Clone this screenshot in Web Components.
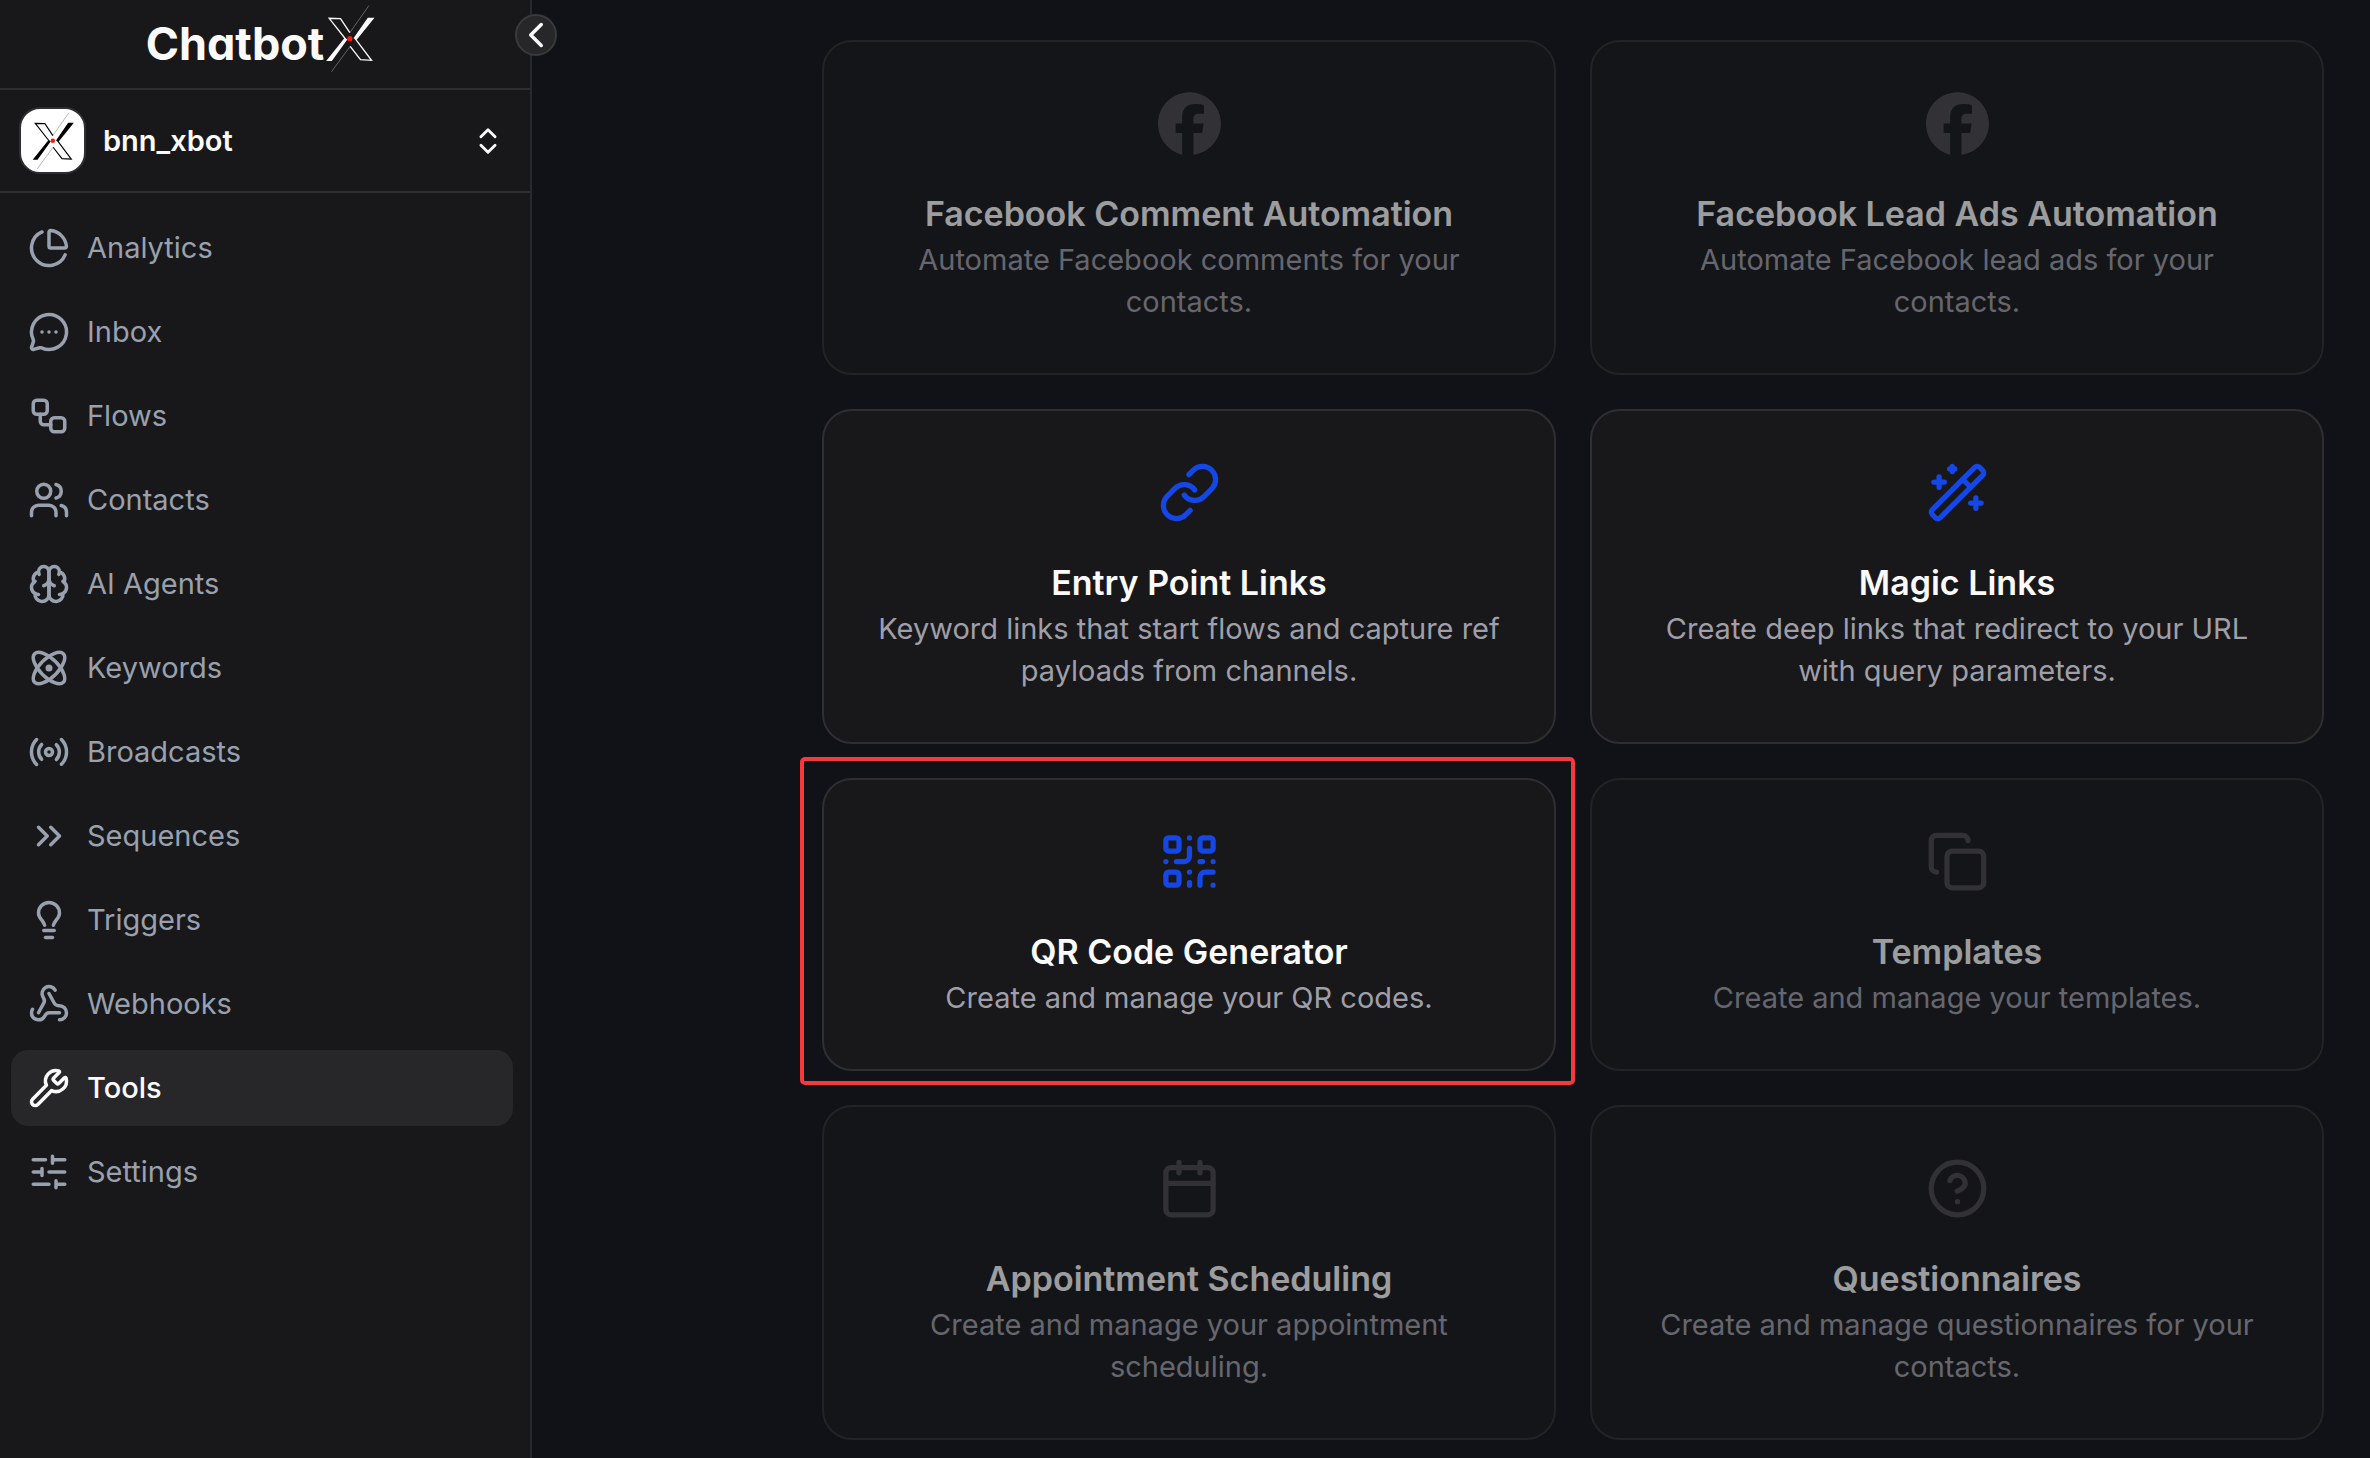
<!DOCTYPE html>
<html lang="en">
<head>
<meta charset="utf-8">
<meta name="viewport" content="width=device-width, initial-scale=1">
<title>ChatbotX - Tools</title>
<style>
  :root {
    --bg: #101217;
    --panel: #18181a;
    --panel-active: #272729;
    --line: #2f2f31;
    --text: #fafafa;
    --muted: #9f9fa9;
    --nav: #99a1af;
    --accent: #1447e6;
    --mark: #f5393c;
  }

  body {
    margin: 0;
    background: var(--bg);
    color: var(--text);
    font-family: Inter, "Liberation Sans", sans-serif;
    font-size: 29px;
    line-height: 42px;
  }
</style>
</head>
<body>

<app-shell>
  <side-bar slot="sidebar">
    <team-switcher slot="team">bnn_xbot</team-switcher>
    <nav-item icon="pie">Analytics</nav-item>
    <nav-item icon="message">Inbox</nav-item>
    <nav-item icon="workflow">Flows</nav-item>
    <nav-item icon="users">Contacts</nav-item>
    <nav-item icon="brain">AI Agents</nav-item>
    <nav-item icon="atom">Keywords</nav-item>
    <nav-item icon="radio">Broadcasts</nav-item>
    <nav-item icon="chevrons-right">Sequences</nav-item>
    <nav-item icon="bulb">Triggers</nav-item>
    <nav-item icon="webhook">Webhooks</nav-item>
    <nav-item icon="wrench" active>Tools</nav-item>
    <nav-item icon="sliders">Settings</nav-item>
  </side-bar>

  <tool-card icon="facebook" disabled>
    <span slot="title">Facebook Comment Automation</span>
    Automate Facebook comments for your contacts.
  </tool-card>
  <tool-card icon="facebook" disabled>
    <span slot="title">Facebook Lead Ads Automation</span>
    Automate Facebook lead ads for your contacts.
  </tool-card>
  <tool-card icon="link">
    <span slot="title">Entry Point Links</span>
    Keyword links that start flows and capture ref payloads from channels.
  </tool-card>
  <tool-card icon="wand">
    <span slot="title">Magic Links</span>
    Create deep links that redirect to your URL with query parameters.
  </tool-card>
  <tool-card icon="qr" marked>
    <span slot="title">QR Code Generator</span>
    Create and manage your QR codes.
  </tool-card>
  <tool-card icon="copy" disabled>
    <span slot="title">Templates</span>
    Create and manage your templates.
  </tool-card>
  <tool-card icon="calendar" disabled>
    <span slot="title">Appointment Scheduling</span>
    Create and manage your appointment scheduling.
  </tool-card>
  <tool-card icon="help" disabled>
    <span slot="title">Questionnaires</span>
    Create and manage questionnaires for your contacts.
  </tool-card>
</app-shell>

<script>
const ICONS = {
  pie: `<path d="M21 12c.552 0 1.005-.449.95-.998a10 10 0 0 0-8.953-8.951c-.55-.055-.998.398-.998.95v8a1 1 0 0 0 1 1z"/><path d="M21.21 15.89A10 10 0 1 1 8 2.83"/>`,
  message: `<path d="M2.992 16.342a2 2 0 0 1 .094 1.167l-1.065 3.29a1 1 0 0 0 1.236 1.168l3.413-.998a2 2 0 0 1 1.099.092 10 10 0 1 0-4.777-4.719"/><path d="M8 12h.01M12 12h.01M16 12h.01"/>`,
  workflow: `<rect width="8" height="8" x="3" y="3" rx="2"/><path d="M7 11v4a2 2 0 0 0 2 2h4"/><rect width="8" height="8" x="13" y="13" rx="2"/>`,
  users: `<path d="M16 21v-2a4 4 0 0 0-4-4H6a4 4 0 0 0-4 4v2"/><path d="M16 3.128a4 4 0 0 1 0 7.744"/><path d="M22 21v-2a4 4 0 0 0-3-3.87"/><circle cx="9" cy="7" r="4"/>`,
  brain: `<path d="M12 5a3 3 0 1 0-5.997.125 4 4 0 0 0-2.526 5.77 4 4 0 0 0 .556 6.588A4 4 0 1 0 12 18Z"/><path d="M12 5a3 3 0 1 1 5.997.125 4 4 0 0 1 2.526 5.77 4 4 0 0 1-.556 6.588A4 4 0 1 1 12 18Z"/><path d="M15 13a4.5 4.5 0 0 1-3-4 4.5 4.5 0 0 1-3 4"/><path d="M17.599 6.5a3 3 0 0 0 .399-1.375"/><path d="M6.003 5.125A3 3 0 0 0 6.401 6.5"/><path d="M3.477 10.896a4 4 0 0 1 .585-.396"/><path d="M19.938 10.5a4 4 0 0 1 .585.396"/><path d="M6 18a4 4 0 0 1-1.967-.516"/><path d="M19.967 17.484A4 4 0 0 1 18 18"/>`,
  atom: `<circle cx="12" cy="12" r="1"/><path d="M20.2 20.2c2.04-2.03.02-7.36-4.5-11.9-4.54-4.52-9.87-6.54-11.9-4.5-2.04 2.03-.02 7.36 4.5 11.9 4.54 4.52 9.87 6.54 11.9 4.5Z"/><path d="M15.7 15.7c4.52-4.54 6.54-9.87 4.5-11.9-2.03-2.04-7.36-.02-11.9 4.5-4.52 4.54-6.54 9.87-4.5 11.9 2.03 2.04 7.36.02 11.9-4.5Z"/>`,
  radio: `<path d="M4.9 19.1C1 15.2 1 8.8 4.9 4.9"/><path d="M7.8 16.2c-2.3-2.3-2.3-6.1 0-8.5"/><circle cx="12" cy="12" r="2"/><path d="M16.2 7.8c2.3 2.3 2.3 6.1 0 8.5"/><path d="M19.1 4.9C23 8.8 23 15.1 19.1 19"/>`,
  "chevrons-right": `<path d="m6 17 5-5-5-5"/><path d="m13 17 5-5-5-5"/>`,
  bulb: `<path d="M14.5 15c.2-1 .7-1.7 1.5-2.8C17.5 10.6 18 9.5 18 8A6 6 0 0 0 6 8c0 1.5.5 2.6 2 4.2.8 1.1 1.3 1.8 1.5 2.8"/><path d="M9 18h6"/><path d="M10 22h4"/>`,
  webhook: `<path d="M18 16.98h-5.99c-1.1 0-1.95.94-2.48 1.9A4 4 0 0 1 2 17c.01-.7.2-1.4.57-2"/><path d="m6 17 3.13-5.78c.53-.97.1-2.18-.5-3.1a4 4 0 1 1 6.89-4.06"/><path d="m12 6 3.13 5.73C15.66 12.7 16.9 13 18 13a4 4 0 0 1 0 8"/>`,
  wrench: `<path d="M14.7 6.3a1 1 0 0 0 0 1.4l1.6 1.6a1 1 0 0 0 1.4 0l3.106-3.105c.32-.322.863-.22.983.218a6 6 0 0 1-8.259 7.057l-7.91 7.91a1 1 0 0 1-2.999-3l7.91-7.91a6 6 0 0 1 7.057-8.259c.438.12.54.662.219.984z"/>`,
  sliders: `<path d="M21 5H14M10 5H3M21 12H12M8 12H3M21 19H16M12 19H3M14 3V7M8 10V14M16 17V21"/>`,
  "chevrons-up-down": `<path d="m7 15 5 5 5-5"/><path d="m7 9 5-5 5 5"/>`,
  "chevron-left": `<path d="m15 18-6-6 6-6"/>`,
  facebook: `<path fill="currentColor" stroke="none" d="M24 12.073c0-6.627-5.373-12-12-12s-12 5.373-12 12c0 5.7 3.92 10.48 9.2 11.8V15.6H6.7v-3.6h2.5V9.8c0-3.6 1.9-5.2 5.1-5.2.9 0 2 .1 3.2.4v3.3h-1.8c-1.7 0-2.2.7-2.2 2.2V12h3.9l-.6 3.6h-3.3v8.3C19.3 23.2 24 18.1 24 12.073z"/>`,
  link: `<path d="M10 13a5 5 0 0 0 7.54.54l3-3a5 5 0 0 0-7.07-7.07l-1.72 1.71"/><path d="M14 11a5 5 0 0 0-7.54-.54l-3 3a5 5 0 0 0 7.07 7.07l1.71-1.71"/>`,
  wand: `<path d="m21.64 3.64-1.28-1.28a1.21 1.21 0 0 0-1.72 0L2.36 18.64a1.21 1.21 0 0 0 0 1.72l1.28 1.28a1.2 1.2 0 0 0 1.72 0L21.64 5.36a1.2 1.2 0 0 0 0-1.72"/><path d="m14 7 3 3"/><path d="M5 6v4M19 14v4M10 2v2M7 8H3M21 16h-4M11 3H9"/>`,
  qr: `<rect width="5" height="5" x="3" y="3" rx="1"/><rect width="5" height="5" x="16" y="3" rx="1"/><rect width="5" height="5" x="3" y="16" rx="1"/><path d="M21 16h-3a2 2 0 0 0-2 2v3"/><path d="M21 21v.01"/><path d="M12 7v3a2 2 0 0 1-2 2H7"/><path d="M3 12h.01M12 3h.01M12 16v.01M16 12h1M21 12v.01M12 21v-1"/>`,
  copy: `<rect width="14" height="14" x="8" y="8" rx="2"/><path d="M4 16c-1.1 0-2-.9-2-2V4c0-1.1.9-2 2-2h10c1.1 0 2 .9 2 2"/>`,
  calendar: `<path d="M8 2v4"/><path d="M16 2v4"/><rect width="18" height="18" x="3" y="4" rx="2"/><path d="M3 10h18"/>`,
  help: `<circle cx="12" cy="12" r="10"/><path d="M9.09 9a3 3 0 0 1 5.83 1c0 2-3 3-3 3"/><path d="M12 17h.01"/>`
};

// one icon on the 24x24 grid, sized by --icon-size
customElements.define("ui-icon",
  class extends HTMLElement {

    constructor() {
      super();
      this.attachShadow({ mode: "open" });
    }

    connectedCallback() {
      this.shadowRoot.innerHTML = `
      <style>
        :host {
          display: block;
          flex: none;
          width: var(--icon-size, 42px);
          height: var(--icon-size, 42px);
        }

        svg {
          display: block;
          width: 100%;
          height: 100%;
        }
      </style>
      <svg viewBox="0 0 24 24" fill="none" stroke="currentColor" stroke-width="2"
        stroke-linecap="round" stroke-linejoin="round" aria-hidden="true">${ICONS[this.getAttribute("name")]}</svg>`;
    }
  }
);

// the X of the brand, drawn in the current colour with a red dot
customElements.define("brand-x",
  class extends HTMLElement {

    constructor() {
      super();
      this.attachShadow({ mode: "open" }).innerHTML = `
      <style>
        :host {
          display: block;
          flex: none;
        }

        svg {
          display: block;
          width: 100%;
          height: 100%;
        }
      </style>
      <svg viewBox="0 0 155 210" fill="none" stroke="currentColor" aria-hidden="true">
        <path fill="currentColor" stroke="none" d="M131 41 151 41 97 108 88 103ZM6 171 23 171 70 106 61 102Z"/>
        <path stroke-width="4" d="M64 105 15 43 49 44 77 86M78 127 109 167 142 169 93 104"/>
        <path stroke-width="2" opacity="0.5" d="M77 86 134 5M78 127 22 203"/>
        <circle cx="77" cy="104" r="8" fill="#ff1a0a" stroke="none"/>
      </svg>`;
    }
  }
);

customElements.define("nav-item",
  class extends HTMLElement {

    constructor() {
      super();
      this.attachShadow({ mode: "open" });
    }

    connectedCallback() {
      this.shadowRoot.innerHTML = `
      <style>
        :host {
          display: block;
        }

        a {
          display: flex;
          align-items: center;
          gap: 17px;
          padding: 17px;
          border-radius: 17px;
          color: var(--nav);
          text-decoration: none;
        }

        :host([active]) a {
          background: var(--panel-active);
          color: var(--text);
          font-weight: 500;
        }
      </style>
      <a href="#"><ui-icon name="${this.getAttribute("icon")}"></ui-icon><span><slot></slot></span></a>`;
    }
  }
);

customElements.define("team-switcher",
  class extends HTMLElement {

    constructor() {
      super();
      this.attachShadow({ mode: "open" }).innerHTML = `
      <style>
        :host {
          display: block;
          border-bottom: 2px solid var(--line);
        }

        button {
          display: flex;
          align-items: center;
          gap: 17px;
          width: 100%;
          padding: 17px 25px 17px 19px;
          border: 0;
          background: none;
          color: var(--text);
          font: inherit;
          font-weight: 600;
          text-align: left;
        }

        .avatar {
          display: grid;
          place-content: center;
          box-sizing: border-box;
          width: 67px;
          height: 67px;
          border: 2px solid var(--line);
          border-radius: 21px;
          background: #fff;
          color: #000;
        }

        brand-x {
          width: 44px;
          height: 60px;
        }

        .name {
          flex: 1;
        }

        ui-icon {
          --icon-size: 34px;
        }
      </style>
      <button type="button">
        <span class="avatar"><brand-x></brand-x></span>
        <span class="name"><slot></slot></span>
        <ui-icon name="chevrons-up-down"></ui-icon>
      </button>`;
    }
  }
);

customElements.define("side-bar",
  class extends HTMLElement {

    constructor() {
      super();
      this.attachShadow({ mode: "open" }).innerHTML = `
      <style>
        :host {
          display: block;
          position: relative;
          background: var(--panel);
          border-right: 2px solid #262932;
        }

        header {
          display: flex;
          justify-content: center;
          align-items: center;
          height: 88px;
          padding-right: 8px;
          border-bottom: 2px solid var(--line);
        }

        .wordmark {
          font-size: 45px;
          font-weight: 700;
          line-height: 70px;
          font-feature-settings: "cv11";
        }

        brand-x {
          width: 52px;
          height: 70px;
          margin-bottom: 10px;
        }

        nav {
          display: grid;
          gap: 8px;
          padding: 17px 17px 17px 11px;
        }

        /* sits on the border between sidebar and page */
        .collapse {
          position: absolute;
          top: 14px;
          right: -27px;
          display: grid;
          place-content: center;
          width: 42px;
          height: 42px;
          padding: 0;
          border: 2px solid #3a3a3d;
          border-radius: 50%;
          background: var(--panel-active);
          color: var(--text);
        }
      </style>
      <header><span class="wordmark">Chatbot</span><brand-x></brand-x></header>
      <slot name="team"></slot>
      <nav><slot></slot></nav>
      <button class="collapse" type="button" aria-label="Collapse sidebar"><ui-icon name="chevron-left"></ui-icon></button>`;
    }
  }
);

customElements.define("tool-card",
  class extends HTMLElement {

    constructor() {
      super();
      this.attachShadow({ mode: "open" });
    }

    connectedCallback() {
      this.shadowRoot.innerHTML = `
      <style>
        :host {
          display: block;
          position: relative;
        }

        a {
          display: flex;
          flex-direction: column;
          align-items: center;
          box-sizing: border-box;
          height: 100%;
          padding: 50px;
          border: 2px solid var(--line);
          border-radius: 30px;
          background: var(--panel);
          color: var(--muted);
          text-align: center;
          text-decoration: none;
        }

        ui-icon {
          --icon-size: 63px;
          margin-bottom: 34px;
          color: var(--accent);
        }

        h3 {
          margin: 0;
          color: var(--text);
          font-size: 34px;
          font-weight: 600;
          line-height: 50px;
        }

        p {
          margin: 0;
        }

        :host([disabled]) a {
          opacity: 0.6;
        }

        :host([disabled]) ui-icon {
          color: #47474b;
        }

        :host([marked])::after {
          content: "";
          position: absolute;
          inset: -21px -19px -14px -22px;
          border: 4px solid var(--mark);
          border-radius: 5px;
          pointer-events: none;
        }
      </style>
      <a href="#">
        <ui-icon name="${this.getAttribute("icon")}"></ui-icon>
        <h3><slot name="title"></slot></h3>
        <p><slot></slot></p>
      </a>`;
    }
  }
);

customElements.define("app-shell",
  class extends HTMLElement {

    constructor() {
      super();
      this.attachShadow({ mode: "open" }).innerHTML = `
      <style>
        :host {
          display: grid;
          grid-template-columns: 532px 1fr;
          min-height: 100vh;
        }

        main {
          display: grid;
          grid-template-columns: 1fr 1fr;
          gap: 34px;
          align-content: start;
          padding: 40px 46px 17px 290px;
        }
      </style>
      <slot name="sidebar"></slot>
      <main><slot></slot></main>`;
    }
  }
);
</script>
</body>
</html>
